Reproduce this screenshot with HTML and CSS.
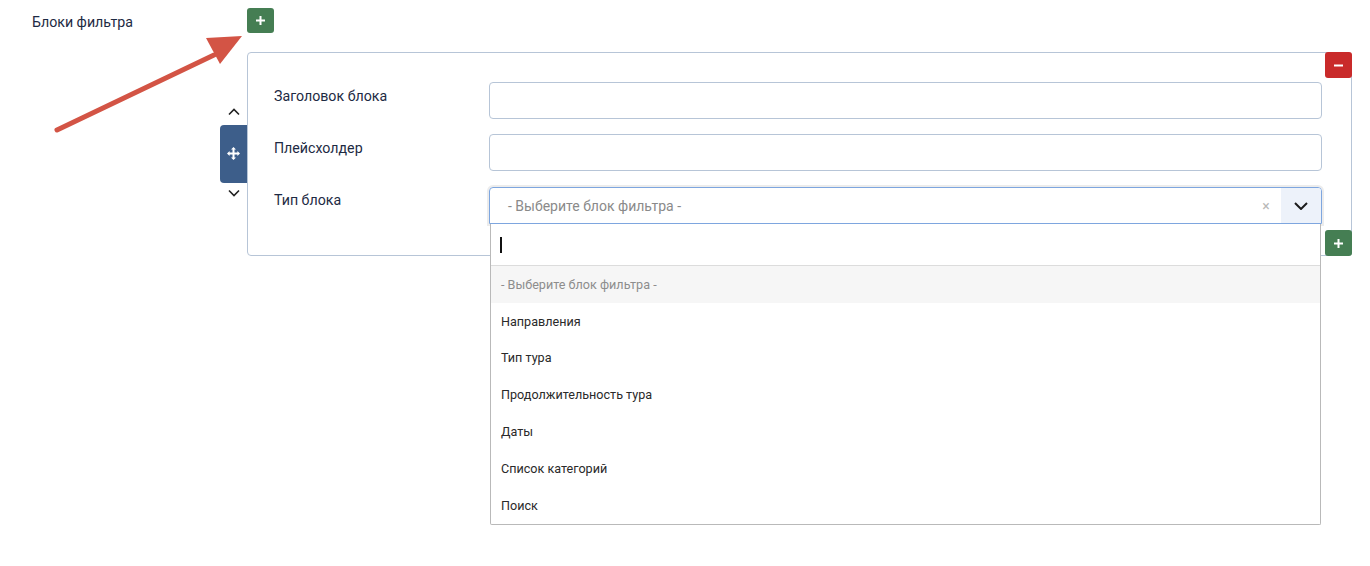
FILE: index.html
```html
<!DOCTYPE html>
<html lang="ru">
<head>
  <meta charset="utf-8">
  <title>Блоки фильтра</title>
  <link rel="stylesheet" href="styles.css">
</head>
<body>
  <div class="page">

    <div class="field-head">
      <span class="field-label">Блоки фильтра</span>
      <button class="btn btn-add" type="button">
        <svg width="11" height="11" viewBox="0 0 11 11"><path d="M5.5 1v9M1 5.5h9" stroke="#fff" stroke-width="2"/></svg>
      </button>
    </div>

    <div class="subform-row">
      <div class="sort-handle">
        <svg class="chev chev-up" width="12" height="8" viewBox="0 0 12 8"><path d="M1 6.5 6 1.5l5 5" fill="none" stroke="#222" stroke-width="1.6"/></svg>
        <span class="move">
          <svg width="13" height="13" viewBox="0 0 13 13" fill="#fff">
            <path d="M6.5 0 9 2.6H7.5V5.5h2.9V4L13 6.5 10.4 9V7.5H7.5v2.9H9L6.5 13 4 10.4h1.5V7.5H2.6V9L0 6.5 2.6 4v1.5h2.9V2.6H4z"/>
          </svg>
        </span>
        <svg class="chev chev-down" width="12" height="8" viewBox="0 0 12 8"><path d="M1 1.5 6 6.5l5-5" fill="none" stroke="#222" stroke-width="1.6"/></svg>
      </div>

      <div class="subform-card">
        <button class="btn btn-remove" type="button">
          <svg width="11" height="11" viewBox="0 0 11 11"><path d="M1 5.5h9" stroke="#fff" stroke-width="2"/></svg>
        </button>

        <div class="control-group">
          <label class="control-label">Заголовок блока</label>
          <div class="controls"><input class="form-control" type="text"></div>
        </div>

        <div class="control-group">
          <label class="control-label">Плейсхолдер</label>
          <div class="controls"><input class="form-control" type="text"></div>
        </div>

        <div class="control-group">
          <label class="control-label">Тип блока</label>
          <div class="controls select-wrap">
            <div class="choices is-focused">
              <span class="choices-text">- Выберите блок фильтра -</span>
              <span class="choices-clear">×</span>
              <span class="choices-toggle">
                <svg width="14" height="8" viewBox="0 0 14 8"><path d="M1 1l6 6 6-6" fill="none" stroke="#1c1c1c" stroke-width="2"/></svg>
              </span>
            </div>
            <div class="dropdown">
              <div class="dropdown-search"><span class="caret"></span></div>
              <div class="dropdown-item is-placeholder">- Выберите блок фильтра -</div>
              <div class="dropdown-item">Направления</div>
              <div class="dropdown-item">Тип тура</div>
              <div class="dropdown-item">Продолжительность тура</div>
              <div class="dropdown-item">Даты</div>
              <div class="dropdown-item">Список категорий</div>
              <div class="dropdown-item">Поиск</div>
            </div>
          </div>
        </div>

        <button class="btn btn-add btn-add-below" type="button">
          <svg width="11" height="11" viewBox="0 0 11 11"><path d="M5.5 1v9M1 5.5h9" stroke="#fff" stroke-width="2"/></svg>
        </button>
      </div>
    </div>

    <!-- стрелка-подсказка поверх страницы -->
    <svg class="hint-arrow" width="260" height="140" viewBox="0 0 260 140">
      <path d="M57 130 L214 55" stroke="#d35445" stroke-width="5" stroke-linecap="round"/>
      <path d="M242 36 L206 38 L220 64 Z" fill="#d35445"/>
    </svg>

  </div>
</body>
</html>
```

FILE: styles.css
```css
html, body {
  margin: 0;
  padding: 0;
  height: 100%;
  background: #fff;
  font-family: Roboto, 'Noto Sans', sans-serif;
  color: #1d2a43;
}

.page {
  position: relative;
  box-sizing: border-box;
  min-height: 100%;
  padding-top: 8px;
}

.field-head {
  display: flex;
  align-items: center;
  padding-left: 32px;
}

.field-label {
  width: 215px;
  padding-top: 2px;
  font-size: 14.2px;
  line-height: 20px;
}

.btn {
  display: flex;
  align-items: center;
  justify-content: center;
  width: 27px;
  height: 25px;
  padding: 0;
  border: none;
  border-radius: 3px;
  cursor: pointer;
}

.btn-add {
  background: #457e53;
}

.btn-remove {
  position: absolute;
  top: -1px;
  right: -1px;
  height: 26px;
  background: #c92a2a;
}

.btn-add-below {
  position: absolute;
  bottom: -1px;
  right: -1px;
  height: 26px;
}

.subform-row {
  display: flex;
  margin-top: 19px;
  padding-left: 220px;
}

.sort-handle {
  display: flex;
  flex-direction: column;
  align-items: center;
  justify-content: center;
  width: 27px;
  padding-bottom: 4px;
}

.chev-up {
  margin-bottom: 9px;
}

.chev-down {
  margin-top: 6px;
}

.move {
  display: flex;
  align-items: center;
  justify-content: center;
  width: 27px;
  height: 58px;
  background: #3d5e8a;
  border-radius: 4px 0 0 4px;
}

.subform-card {
  position: relative;
  box-sizing: border-box;
  width: 1105px;
  padding: 29px 29px 31px 26px;
  border: 1px solid #b7c5d7;
  border-radius: 4px;
}

.control-group {
  display: flex;
  margin-bottom: 15px;
}

.control-group:last-of-type {
  margin-bottom: 0;
}

.control-label {
  width: 215px;
  padding-top: 4px;
  font-size: 14.2px;
  line-height: 20px;
}

.controls {
  flex: 1;
}

.form-control {
  display: block;
  box-sizing: border-box;
  width: 100%;
  height: 37px;
  border: 1px solid #b7c5d7;
  border-radius: 4px;
  font: inherit;
}

.select-wrap {
  position: relative;
  padding-top: 1px;
}

.choices {
  display: flex;
  align-items: center;
  box-sizing: border-box;
  height: 37px;
  border: 1px solid #7ea6df;
  border-radius: 4px 4px 0 0;
  box-shadow: 0 0 0 2px #ececec;
  font-size: 14px;
  color: #8a8a8a;
  overflow: hidden;
}

.choices-text {
  flex: 1;
  padding-left: 18px;
}

.choices-clear {
  width: 14px;
  margin-right: 8px;
  font-size: 14px;
  color: #b8b8b8;
  text-align: center;
}

.choices-toggle {
  display: flex;
  align-items: center;
  justify-content: center;
  width: 40px;
  height: 100%;
  background: #edf2fa;
}

.dropdown {
  position: absolute;
  top: 100%;
  left: 1px;
  right: 1px;
  z-index: 10;
  background: #fff;
  border: 1px solid #b9b9b9;
  border-top: none;
  border-radius: 0 0 2px 2px;
}

.dropdown-search {
  display: flex;
  align-items: center;
  height: 41px;
  padding-left: 9px;
  border-bottom: 1px solid #dcdcdc;
}

.caret {
  width: 1.5px;
  height: 16px;
  background: #111;
}

.dropdown-item {
  display: flex;
  align-items: center;
  height: 36.8px;
  padding-left: 10px;
  font-size: 12.6px;
  color: #2a2a2a;
}

.dropdown-item.is-placeholder {
  background: #f6f6f6;
  color: #8d8d8d;
}

.hint-arrow {
  position: absolute;
  top: 0;
  left: 0;
  pointer-events: none;
}
```
